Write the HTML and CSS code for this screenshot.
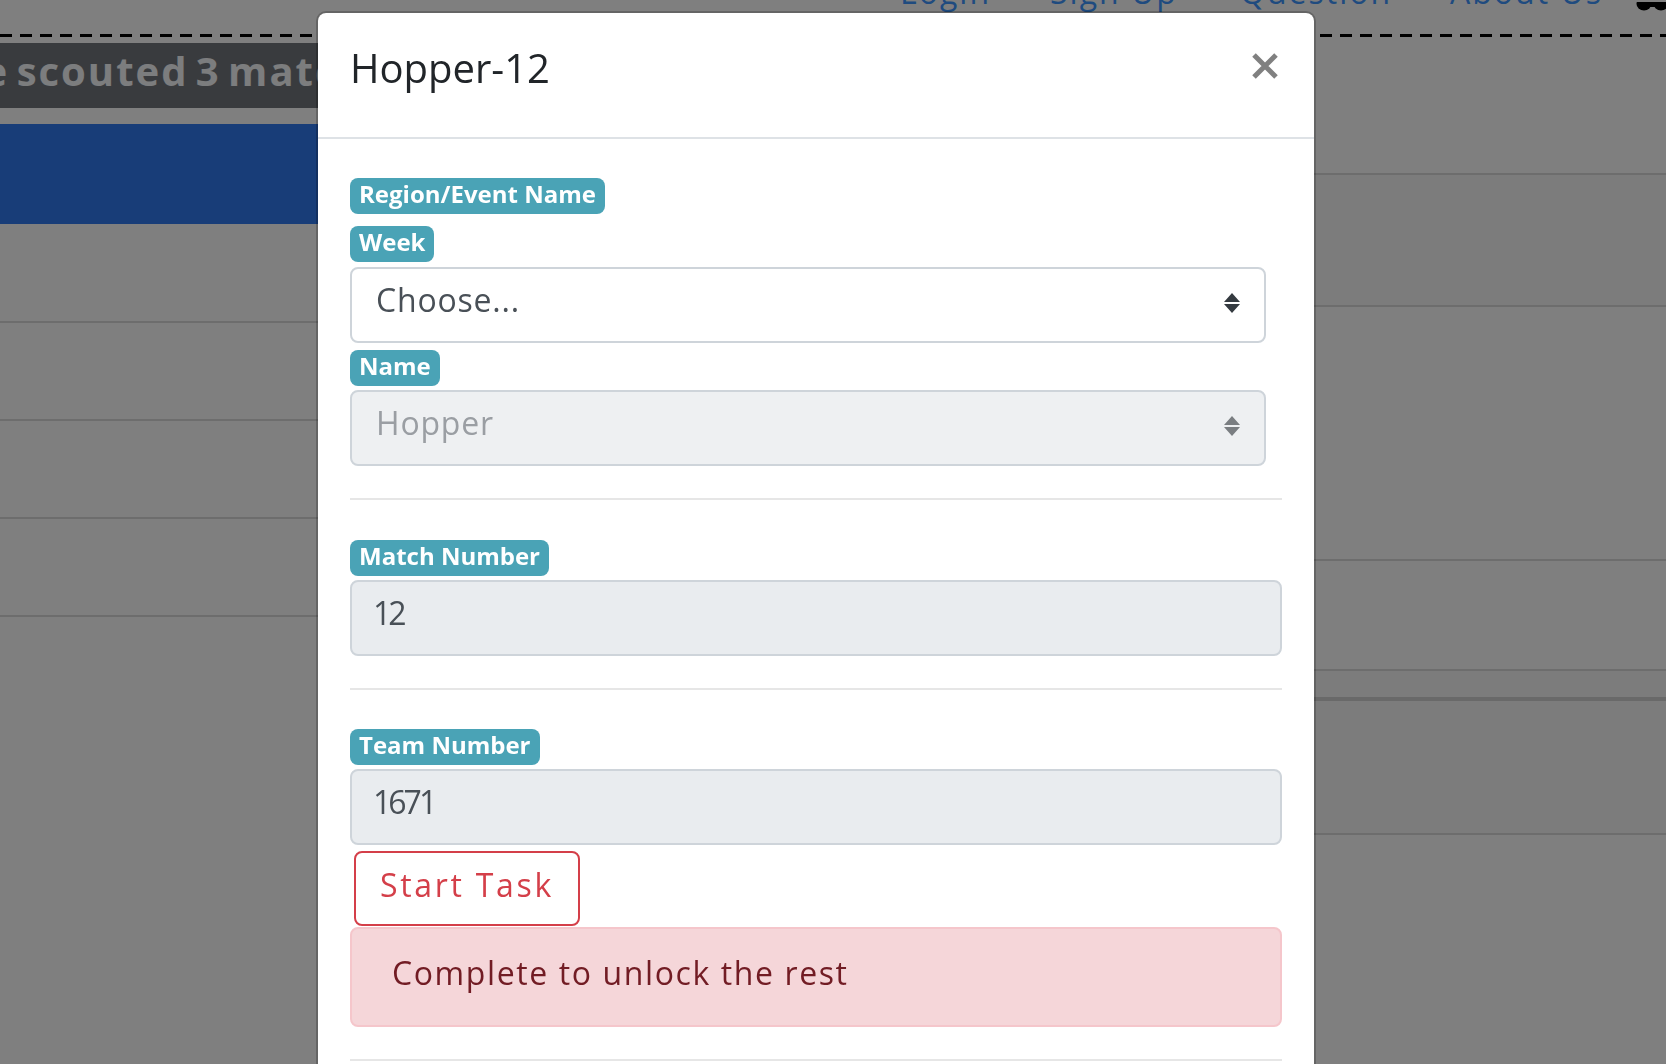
FILE: index.html
```html
<!DOCTYPE html>
<html lang="en">
<head>
<meta charset="utf-8">
<title>Hopper-12</title>
<link rel="stylesheet" href="styles.css">
</head>
<body>
<div class="page">
  <nav class="topnav">
    <a class="navlink" href="#">Login</a>
    <a class="navlink" href="#">Sign Up</a>
    <a class="navlink" href="#">Question</a>
    <a class="navlink" href="#">About Us</a>
    <svg class="navicon" width="30" height="10" viewBox="0 0 30 10"><ellipse cx="8" cy="2" rx="7.5" ry="6.5"/><ellipse cx="25" cy="2" rx="7.5" ry="6.5"/><rect x="8" y="0" width="17" height="5"/></svg>
  </nav>
  <div class="dashline"></div>
  <div class="main">
    <div class="leftcol">
      <div class="scorebar">You have scouted 3 matches</div>
      <div class="hero"></div>
      <div class="lrow first"></div>
      <div class="lrow"></div>
      <div class="lrow"></div>
      <div class="lrow"></div>
    </div>
    <div class="rightcol">
      <div class="rrow r1"></div>
      <div class="rrow r2 striped"></div>
      <div class="rrow r3"></div>
      <div class="rrow r4"></div>
      <div class="rrow r5 striped"></div>
      <div class="rrow r6 striped"></div>
    </div>
  </div>
</div>
<div class="backdrop"></div>
<div class="modal">
  <div class="mhead">
    <h5 class="mtitle">Hopper-12</h5>
    <svg class="close" width="28" height="26" viewBox="0 0 28 26"><path d="M3 2 L25 24 M25 2 L3 24" stroke="#808080" stroke-width="5" stroke-linecap="butt"/></svg>
  </div>
  <div class="mbody">
    <span class="tag">Region/Event Name</span>
    <span class="tag tag-week">Week</span>
    <div class="ctl sel sel-week">
      <span>Choose...</span>
      <svg class="arrows" width="16" height="20" viewBox="0 0 16 20"><path d="M8 0 L16 9 L0 9 Z M0 11 L16 11 L8 20 Z" fill="#343a40"/></svg>
    </div>
    <span class="tag tag-name">Name</span>
    <div class="ctl sel sel-name">
      <span>Hopper</span>
      <svg class="arrows" width="16" height="20" viewBox="0 0 16 20"><path d="M8 0 L16 9 L0 9 Z M0 11 L16 11 L8 20 Z" fill="#7a7e82"/></svg>
    </div>
    <hr class="sep sep-1">
    <span class="tag tag-match">Match Number</span>
    <div class="ctl inp">12</div>
    <hr class="sep sep-2">
    <span class="tag tag-team">Team Number</span>
    <div class="ctl inp">1671</div>
    <button class="btn-start" type="button">Start Task</button>
    <div class="alert">Complete to unlock the rest</div>
    <hr class="sep sep-3">
  </div>
</div>
</body>
</html>
```
FILE: styles.css
```css
html, body {
  margin: 0;
  height: 1064px;
  overflow: hidden;
}
body {
  font-family: "Open Sans", "DejaVu Sans", sans-serif;
  background: #ffffff;
  color: #212529;
}

/* ---------- page behind the modal ---------- */
.topnav {
  display: grid;
  grid-template-columns: 150px 190px 210px 186px 1fr;
  align-items: end;
  height: 40px;
  margin-top: -28px;
  padding-left: 900px;
  font-size: 32px;
  line-height: 40px;
}
.navlink {
  color: #3e96ff;
  text-decoration: none;
  letter-spacing: 2px;
  white-space: nowrap;
}
.navicon {
  display: block;
  fill: #000;
}
.dashline {
  height: 3px;
  margin-top: 22px;
  background: repeating-linear-gradient(90deg, #000 0 12px, transparent 12px 20px);
}
.main {
  display: grid;
  grid-template-columns: 1000px 1fr;
}
.scorebar {
  margin-top: 6px;
  height: 65px;
  box-sizing: border-box;
  padding-bottom: 10px;
  background: #72767c;
  color: #f8fafc;
  font-size: 40px;
  font-weight: 700;
  line-height: 55px;
  letter-spacing: 2px;
  word-spacing: -5px;
  white-space: nowrap;
  overflow: hidden;
  text-indent: -185px;
}
.hero {
  margin-top: 16px;
  height: 100px;
  background: #307af0;
}
.lrow {
  height: 96px;
  border-bottom: 2px solid #dadada;
}
.lrow.first {
  margin-top: 1px;
}
.rrow {
  border-bottom: 2px solid #dadada;
}
.rrow.striped {
  background: #f8f8f8;
}
.r1 { height: 136px; }
.r2 { height: 130px; }
.r3 { height: 252px; }
.r4 { height: 108px; }
.r5 { height: 26px; border-bottom-width: 4px; border-bottom-color: #d2d2d2; }
.r6 { height: 132px; }

.backdrop {
  position: fixed;
  inset: 0;
  background: rgba(0, 0, 0, 0.5);
}

/* ---------- modal ---------- */
.modal {
  position: absolute;
  top: 11px;
  left: 316px;
  width: 1000px;
  box-sizing: border-box;
  background: #ffffff;
  background-clip: padding-box;
  border: 2px solid rgba(0, 0, 0, 0.2);
  border-radius: 10px;
}
.mhead {
  display: flex;
  align-items: flex-start;
  padding: 25px 32px 39px;
  border-bottom: 2px solid #dee2e6;
}
.mtitle {
  margin: 0;
  font-size: 40px;
  line-height: 60px;
  font-weight: 500;
  color: #212529;
}
.close {
  display: block;
  margin: 15px 3px 0 auto;
}
.mbody {
  display: flex;
  flex-direction: column;
  align-items: flex-start;
  padding: 39px 32px 60px;
}
.tag {
  display: inline-block;
  font-size: 24px;
  font-weight: 700;
  line-height: 24px;
  padding: 4px 9px 8px;
  border-radius: 8px;
  background: #4aa3b6;
  color: #ffffff;
  margin-bottom: 4px;
}
.tag-week { margin-top: 8px; margin-bottom: 5px; }
.tag-name { margin-top: 7px; }
.tag-match { margin-top: 40px; }
.tag-team { margin-top: 39px; }

.ctl {
  align-self: stretch;
  display: flex;
  justify-content: space-between;
  height: 76px;
  box-sizing: border-box;
  border: 2px solid #ced4da;
  border-radius: 8px;
  padding: 7px 24px 19px;
  font-size: 32px;
  line-height: 48px;
  color: #495057;
}
.sel {
  margin-right: 16px;
  background: #ffffff;
  letter-spacing: 0.8px;
}
.sel-name {
  background: #eef0f2;
  color: #9a9ea3;
}
.arrows {
  display: block;
  margin-top: 17px;
}
.inp {
  background: #e9ecef;
  padding-left: 21px;
  letter-spacing: -3px;
}
.sep {
  align-self: stretch;
  height: 2px;
  border: 0;
  background: #e6e6e6;
  margin: 32px 0 0;
}

.btn-start {
  margin: 6px 0 0 4px;
  height: 75px;
  box-sizing: border-box;
  border: 2px solid #d43f49;
  border-radius: 8px;
  padding: 8px 24px 15px;
  background: #ffffff;
  color: #d43f49;
  font-family: inherit;
  font-size: 32px;
  line-height: 48px;
  letter-spacing: 2.7px;
}
.alert {
  align-self: stretch;
  margin-top: 1px;
  height: 100px;
  box-sizing: border-box;
  padding: 20px 40px 28px;
  border: 2px solid #f5c6cb;
  border-radius: 8px;
  background: #f5d6d9;
  color: #721c24;
  font-size: 32px;
  line-height: 48px;
  letter-spacing: 1.6px;
}
```
